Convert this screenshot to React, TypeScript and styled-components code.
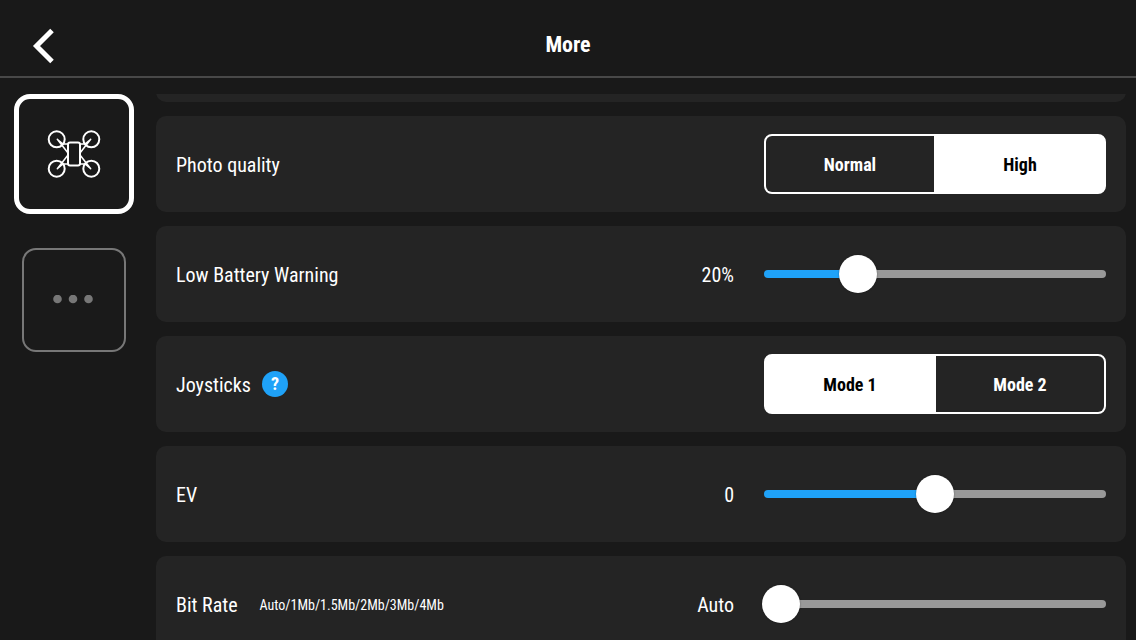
import React, { useLayoutEffect, useRef, useState } from "react";
import styled, { createGlobalStyle } from "styled-components";

const GlobalStyle = createGlobalStyle`
  * { box-sizing: border-box; }
  body {
    margin: 0;
    background: #191919;
    color: #fff;
    font-family: "Roboto Condensed", "Liberation Sans Narrow", "Liberation Sans", sans-serif;
    font-size: 20px;
    line-height: 28px;
  }
  button { font: inherit; color: inherit; cursor: pointer; }
`;

const Screen = styled.div`
  display: flex;
  flex-direction: column;
  height: 100vh;
  overflow: hidden;
`;

const Header = styled.header`
  display: grid;
  grid-template-columns: 88px 1fr 88px;
  align-items: center;
  padding-top: 14px;
  height: 78px;
  flex: none;
  border-bottom: 2px solid #484848;
`;

const BackButton = styled.button`
  display: grid;
  place-items: center;
  height: 60px;
  padding: 2px 0 0;
  border: 0;
  background: none;
`;

const Title = styled.h1`
  margin: 0;
  font-size: 22px;
  font-weight: 700;
  text-align: center;
`;

const Body = styled.div`
  display: flex;
  flex: 1;
  min-height: 0;
  padding: 16px 10px 0 0;
`;

const Sidebar = styled.nav`
  display: flex;
  flex-direction: column;
  align-items: center;
  gap: 34px;
  width: 148px;
  flex: none;
`;

const TabButton = styled.button<{ $active: boolean }>`
  display: grid;
  place-items: center;
  width: ${(p) => (p.$active ? 120 : 104)}px;
  height: ${(p) => (p.$active ? 120 : 104)}px;
  padding: 0;
  border: ${(p) => (p.$active ? "5px solid #fff" : "2px solid #777")};
  border-radius: ${(p) => (p.$active ? 16 : 14)}px;
  background: #1a1a1a;
  && {
    color: ${(p) => (p.$active ? "#fff" : "#777")};
  }
`;

const List = styled.main`
  display: flex;
  flex: 1;
  flex-direction: column;
  gap: 14px;
  min-width: 0;
  margin-left: 8px;
  overflow-y: auto;
  scrollbar-width: none;
`;

const Card = styled.section`
  display: flex;
  align-items: center;
  flex: none;
  height: 96px;
  padding: 0 20px;
  border-radius: 10px;
  background: #242424;
`;

const Label = styled.span`
  padding-top: 2px;
`;

const Hint = styled.span`
  margin-left: 22px;
  padding-top: 2px;
  font-size: 14px;
`;

const Value = styled.output`
  margin-left: auto;
  padding: 2px 30px 0 0;
`;

const HelpButton = styled.button`
  display: grid;
  place-items: center;
  width: 26px;
  height: 26px;
  margin-left: 11px;
  padding: 0;
  border: 0;
  border-radius: 50%;
  background: #1fa2f8;
  && {
    font-size: 18px;
    font-weight: 700;
    line-height: 26px;
  }
`;

const Segments = styled.div`
  display: flex;
  gap: 2px;
  width: 342px;
  height: 60px;
  margin-left: auto;
  border: 2px solid #fff;
  border-radius: 8px;
  background: #fff;
  overflow: hidden;
`;

const Segment = styled.button<{ $selected: boolean }>`
  flex: 1;
  padding: 2px 0 0;
  border: 0;
  background: ${(p) => (p.$selected ? "#fff" : "#242424")};
  && {
    color: ${(p) => (p.$selected ? "#000" : "#fff")};
    font-size: 18px;
    font-weight: 700;
  }
`;

const Track = styled.div`
  display: flex;
  align-items: center;
  width: 342px;
  height: 8px;
  border-radius: 4px;
`;

const Range = styled.input`
  appearance: none;
  flex: 1;
  height: 38px;
  margin: 0 -2px;
  background: none;
  &::-webkit-slider-thumb {
    appearance: none;
    width: 38px;
    height: 38px;
    border: 0;
    border-radius: 50%;
    background: #fff;
    box-shadow: 0 0 2px rgba(0, 0, 0, 0.4);
  }
`;

function Choice({ label, options, initial }: { label: string; options: string[]; initial: number }) {
  const [selected, setSelected] = useState(initial);
  return (
    <Segments role="group" aria-label={label}>
      {options.map((option, i) => (
        <Segment key={option} type="button" $selected={i === selected} aria-pressed={i === selected} onClick={() => setSelected(i)}>
          {option}
        </Segment>
      ))}
    </Segments>
  );
}

interface SliderRowProps {
  id: string;
  label: string;
  hint?: string;
  min: number;
  max: number;
  initial: number;
  format: (value: number) => string;
}

function SliderRow({ id, label, hint, min, max, initial, format }: SliderRowProps) {
  const [value, setValue] = useState(initial);
  const filled = ((value - min) / (max - min)) * 100;
  return (
    <Card>
      <Label as="label" htmlFor={id}>{label}</Label>
      {hint && <Hint>{hint}</Hint>}
      <Value htmlFor={id}>{format(value)}</Value>
      <Track style={{ background: `linear-gradient(to right, #1fa2f8 ${filled}%, #999 ${filled}%)` }}>
        <Range id={id} type="range" min={min} max={max} value={value} onChange={(e) => setValue(Number(e.target.value))} />
      </Track>
    </Card>
  );
}

const BackIcon = () => (
  <svg width="24" height="36" viewBox="0 0 24 36" fill="none" stroke="#fff" strokeWidth="5" aria-hidden="true">
    <path d="M20 2.500 L4.500 18 L20 33.500" />
  </svg>
);

const DroneIcon = () => (
  <svg width="54" height="50" viewBox="0 0 54 50" fill="none" stroke="currentColor" strokeWidth="2" strokeLinejoin="round" aria-hidden="true">
    <circle cx="9.700" cy="10.300" r="8" />
    <circle cx="44.300" cy="10.300" r="8" />
    <circle cx="9.700" cy="39.700" r="8" />
    <circle cx="44.300" cy="39.700" r="8" />
    <rect x="21" y="13.500" width="12" height="23" rx="2" />
    <path strokeWidth="1.500" d="M21 24 L10.300 10.300 L16 15 H21 M33 24 L43.700 10.300 L38 15 H33 M21 26 L10.300 39.700 L16 35 H21 M33 26 L43.700 39.700 L38 35 H33" />
  </svg>
);

const DotsIcon = () => (
  <svg width="42" height="10" viewBox="0 0 42 10" fill="currentColor" aria-hidden="true">
    <circle cx="4.500" cy="4" r="4.300" />
    <circle cx="20" cy="4" r="4.300" />
    <circle cx="35.500" cy="4" r="4.300" />
  </svg>
);

const BIT_RATES = ["Auto", "1Mb", "1.5Mb", "2Mb", "3Mb", "4Mb"];
const INITIAL_SCROLL = 88;

export default function App() {
  const list = useRef<HTMLElement>(null);
  useLayoutEffect(() => {
    if (list.current) list.current.scrollTop = INITIAL_SCROLL;
  }, []);

  return (
    <Screen>
      <GlobalStyle />
      <Header>
        <BackButton type="button" aria-label="Back"><BackIcon /></BackButton>
        <Title>More</Title>
      </Header>
      <Body>
        <Sidebar>
          <TabButton type="button" $active aria-label="Aircraft"><DroneIcon /></TabButton>
          <TabButton type="button" $active={false} aria-label="Other"><DotsIcon /></TabButton>
        </Sidebar>
        <List ref={list}>
          <Card />
          <Card>
            <Label>Photo quality</Label>
            <Choice label="Photo quality" options={["Normal", "High"]} initial={1} />
          </Card>
          <SliderRow id="battery" label="Low Battery Warning" min={10} max={50} initial={20} format={(v) => `${v}%`} />
          <Card>
            <Label>Joysticks</Label>
            <HelpButton type="button">?</HelpButton>
            <Choice label="Joysticks" options={["Mode 1", "Mode 2"]} initial={0} />
          </Card>
          <SliderRow id="ev" label="EV" min={-3} max={3} initial={0} format={(v) => `${v}`} />
          <SliderRow id="bitrate" label="Bit Rate" hint="Auto/1Mb/1.5Mb/2Mb/3Mb/4Mb" min={0} max={5} initial={0} format={(v) => BIT_RATES[v]} />
        </List>
      </Body>
    </Screen>
  );
}
